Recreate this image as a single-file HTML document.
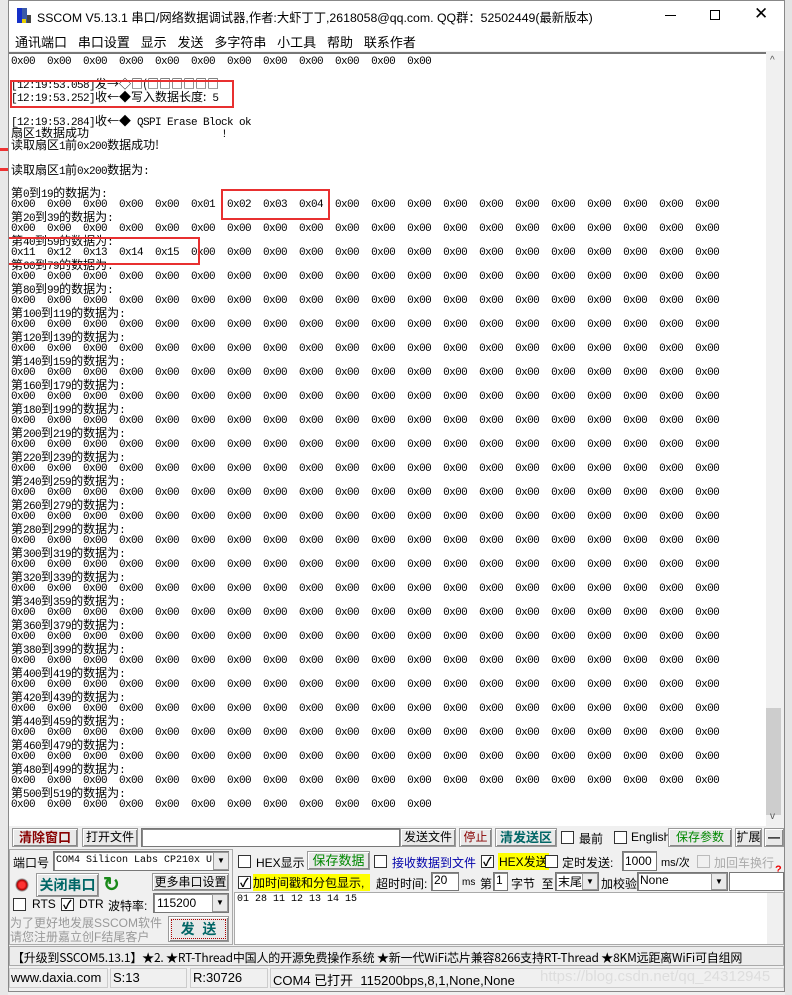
<!DOCTYPE html>
<html><head><meta charset="utf-8">
<style>
*{margin:0;padding:0;box-sizing:border-box}
body{width:792px;height:995px;overflow:hidden;background:#f0f0f0;font-family:"Liberation Sans","Noto Sans CJK SC",sans-serif;font-size:12px;color:#000;position:relative}
.a{position:absolute}
#win{left:8px;top:0;width:777px;height:992px;background:#f0f0f0;border:1px solid #888}
#title{left:9px;top:1px;width:775px;height:29px;background:#fff}
#menu{left:9px;top:30px;width:775px;height:21px;background:#fff}
#txt{left:9px;top:52px;width:757px;height:774px;background:#fff;border-top:2px solid #777;overflow:hidden}
.l{position:absolute;left:2px;white-space:pre;line-height:12px;font-family:"Liberation Mono",monospace;font-size:11px;letter-spacing:-0.6px}
#data{position:absolute;left:2px;top:133px;line-height:12px;font-family:"Liberation Mono",monospace;font-size:11px;letter-spacing:-0.6px}
#data div{height:12px;white-space:pre}
.z{font-family:"Noto Sans CJK SC",sans-serif;font-size:12px;line-height:12px;letter-spacing:0}
.red{position:absolute;border:2px solid #e83030}
.btn{position:absolute;background:#e9e9e9;border:1px solid #999;box-shadow:inset 1px 1px #fff,inset -1px -1px #888;text-align:center;font-size:12px;line-height:17px;white-space:nowrap;overflow:hidden}
.cb{position:absolute;width:13px;height:13px;background:#fff;border:1px solid #333}
.cb.k::after{content:"✓";position:absolute;left:1px;top:-3px;font-size:12px;font-weight:bold}
.inp{position:absolute;background:#fff;border:1px solid #777;box-shadow:inset 1px 1px #888;white-space:nowrap;overflow:hidden}
.t{position:absolute;white-space:nowrap;font-size:12px}
.dd{position:absolute;width:16px;background:#e9e9e9;border:1px solid #999;font-size:8px;text-align:center}
</style></head><body>
<div class="a" style="left:0;top:0;width:8px;height:995px;background:#e8e8e8"></div>
<div class="a" style="left:0;top:148px;width:8px;height:3px;background:#e33"></div>
<div class="a" style="left:0;top:168px;width:8px;height:3px;background:#e33"></div>
<div class="a" style="left:785px;top:0;width:7px;height:995px;background:#e4e4e4"></div>
<div id="win" class="a"></div>
<div id="title" class="a">
 <div class="a" style="left:8px;top:7px;width:5px;height:15px;background:#1530c8"></div>
 <div class="a" style="left:13px;top:7px;width:5px;height:15px;background:#3a5aa8"></div>
 <div class="a" style="left:18px;top:14px;width:4px;height:8px;background:#444"></div>
 <div class="a" style="left:13px;top:18px;width:4px;height:4px;background:#e8d000"></div>
 <div class="t" style="left:28px;top:7px;font-size:12.3px">SSCOM V5.13.1 串口/网络数据调试器,作者:大虾丁丁,2618058@qq.com. QQ群：52502449(最新版本)</div>
 <div class="a" style="left:656px;top:14px;width:11px;height:1px;background:#000"></div>
 <div class="a" style="left:701px;top:9px;width:10px;height:10px;border:1px solid #000"></div>
 <div class="t" style="left:745px;top:3px;font-size:17px">✕</div>
</div>
<div id="menu" class="a"><div class="t" style="left:6px;top:2px;font-size:13px">通讯端口&nbsp;&nbsp; 串口设置&nbsp;&nbsp; 显示&nbsp;&nbsp; 发送&nbsp;&nbsp; 多字符串&nbsp;&nbsp; 小工具&nbsp;&nbsp; 帮助&nbsp;&nbsp; 联系作者</div></div>
<div id="txt" class="a">
<div class="l" style="top:2px">0x00  0x00  0x00  0x00  0x00  0x00  0x00  0x00  0x00  0x00  0x00  0x00</div>
<div class="l" style="top:24px">[12:19:53.058]<span class="z">发→◇□(□□□□□□</span></div>
<div class="l" style="top:37px">[12:19:53.252]<span class="z">收←◆写入数据长度:</span> 5</div>
<div class="l" style="top:61px">[12:19:53.284]<span class="z">收←◆</span> QSPI Erase Block ok</div>
<div class="l" style="top:73px"><span class="z">扇区</span>1<span class="z">数据成功</span>                      !</div>
<div class="l" style="top:85px"><span class="z">读取扇区</span>1<span class="z">前</span>0x200<span class="z">数据成功!</span></div>
<div class="l" style="top:110px"><span class="z">读取扇区</span>1<span class="z">前</span>0x200<span class="z">数据为</span>:</div>
<div id="data">
<div><span class="z">第</span>0<span class="z">到</span>19<span class="z">的数据为</span>:</div><div>0x00  0x00  0x00  0x00  0x00  0x01  0x02  0x03  0x04  0x00  0x00  0x00  0x00  0x00  0x00  0x00  0x00  0x00  0x00  0x00</div>
<div><span class="z">第</span>20<span class="z">到</span>39<span class="z">的数据为</span>:</div><div>0x00  0x00  0x00  0x00  0x00  0x00  0x00  0x00  0x00  0x00  0x00  0x00  0x00  0x00  0x00  0x00  0x00  0x00  0x00  0x00</div>
<div><span class="z">第</span>40<span class="z">到</span>59<span class="z">的数据为</span>:</div><div>0x11  0x12  0x13  0x14  0x15  0x00  0x00  0x00  0x00  0x00  0x00  0x00  0x00  0x00  0x00  0x00  0x00  0x00  0x00  0x00</div>
<div><span class="z">第</span>60<span class="z">到</span>79<span class="z">的数据为</span>:</div><div>0x00  0x00  0x00  0x00  0x00  0x00  0x00  0x00  0x00  0x00  0x00  0x00  0x00  0x00  0x00  0x00  0x00  0x00  0x00  0x00</div>
<div><span class="z">第</span>80<span class="z">到</span>99<span class="z">的数据为</span>:</div><div>0x00  0x00  0x00  0x00  0x00  0x00  0x00  0x00  0x00  0x00  0x00  0x00  0x00  0x00  0x00  0x00  0x00  0x00  0x00  0x00</div>
<div><span class="z">第</span>100<span class="z">到</span>119<span class="z">的数据为</span>:</div><div>0x00  0x00  0x00  0x00  0x00  0x00  0x00  0x00  0x00  0x00  0x00  0x00  0x00  0x00  0x00  0x00  0x00  0x00  0x00  0x00</div>
<div><span class="z">第</span>120<span class="z">到</span>139<span class="z">的数据为</span>:</div><div>0x00  0x00  0x00  0x00  0x00  0x00  0x00  0x00  0x00  0x00  0x00  0x00  0x00  0x00  0x00  0x00  0x00  0x00  0x00  0x00</div>
<div><span class="z">第</span>140<span class="z">到</span>159<span class="z">的数据为</span>:</div><div>0x00  0x00  0x00  0x00  0x00  0x00  0x00  0x00  0x00  0x00  0x00  0x00  0x00  0x00  0x00  0x00  0x00  0x00  0x00  0x00</div>
<div><span class="z">第</span>160<span class="z">到</span>179<span class="z">的数据为</span>:</div><div>0x00  0x00  0x00  0x00  0x00  0x00  0x00  0x00  0x00  0x00  0x00  0x00  0x00  0x00  0x00  0x00  0x00  0x00  0x00  0x00</div>
<div><span class="z">第</span>180<span class="z">到</span>199<span class="z">的数据为</span>:</div><div>0x00  0x00  0x00  0x00  0x00  0x00  0x00  0x00  0x00  0x00  0x00  0x00  0x00  0x00  0x00  0x00  0x00  0x00  0x00  0x00</div>
<div><span class="z">第</span>200<span class="z">到</span>219<span class="z">的数据为</span>:</div><div>0x00  0x00  0x00  0x00  0x00  0x00  0x00  0x00  0x00  0x00  0x00  0x00  0x00  0x00  0x00  0x00  0x00  0x00  0x00  0x00</div>
<div><span class="z">第</span>220<span class="z">到</span>239<span class="z">的数据为</span>:</div><div>0x00  0x00  0x00  0x00  0x00  0x00  0x00  0x00  0x00  0x00  0x00  0x00  0x00  0x00  0x00  0x00  0x00  0x00  0x00  0x00</div>
<div><span class="z">第</span>240<span class="z">到</span>259<span class="z">的数据为</span>:</div><div>0x00  0x00  0x00  0x00  0x00  0x00  0x00  0x00  0x00  0x00  0x00  0x00  0x00  0x00  0x00  0x00  0x00  0x00  0x00  0x00</div>
<div><span class="z">第</span>260<span class="z">到</span>279<span class="z">的数据为</span>:</div><div>0x00  0x00  0x00  0x00  0x00  0x00  0x00  0x00  0x00  0x00  0x00  0x00  0x00  0x00  0x00  0x00  0x00  0x00  0x00  0x00</div>
<div><span class="z">第</span>280<span class="z">到</span>299<span class="z">的数据为</span>:</div><div>0x00  0x00  0x00  0x00  0x00  0x00  0x00  0x00  0x00  0x00  0x00  0x00  0x00  0x00  0x00  0x00  0x00  0x00  0x00  0x00</div>
<div><span class="z">第</span>300<span class="z">到</span>319<span class="z">的数据为</span>:</div><div>0x00  0x00  0x00  0x00  0x00  0x00  0x00  0x00  0x00  0x00  0x00  0x00  0x00  0x00  0x00  0x00  0x00  0x00  0x00  0x00</div>
<div><span class="z">第</span>320<span class="z">到</span>339<span class="z">的数据为</span>:</div><div>0x00  0x00  0x00  0x00  0x00  0x00  0x00  0x00  0x00  0x00  0x00  0x00  0x00  0x00  0x00  0x00  0x00  0x00  0x00  0x00</div>
<div><span class="z">第</span>340<span class="z">到</span>359<span class="z">的数据为</span>:</div><div>0x00  0x00  0x00  0x00  0x00  0x00  0x00  0x00  0x00  0x00  0x00  0x00  0x00  0x00  0x00  0x00  0x00  0x00  0x00  0x00</div>
<div><span class="z">第</span>360<span class="z">到</span>379<span class="z">的数据为</span>:</div><div>0x00  0x00  0x00  0x00  0x00  0x00  0x00  0x00  0x00  0x00  0x00  0x00  0x00  0x00  0x00  0x00  0x00  0x00  0x00  0x00</div>
<div><span class="z">第</span>380<span class="z">到</span>399<span class="z">的数据为</span>:</div><div>0x00  0x00  0x00  0x00  0x00  0x00  0x00  0x00  0x00  0x00  0x00  0x00  0x00  0x00  0x00  0x00  0x00  0x00  0x00  0x00</div>
<div><span class="z">第</span>400<span class="z">到</span>419<span class="z">的数据为</span>:</div><div>0x00  0x00  0x00  0x00  0x00  0x00  0x00  0x00  0x00  0x00  0x00  0x00  0x00  0x00  0x00  0x00  0x00  0x00  0x00  0x00</div>
<div><span class="z">第</span>420<span class="z">到</span>439<span class="z">的数据为</span>:</div><div>0x00  0x00  0x00  0x00  0x00  0x00  0x00  0x00  0x00  0x00  0x00  0x00  0x00  0x00  0x00  0x00  0x00  0x00  0x00  0x00</div>
<div><span class="z">第</span>440<span class="z">到</span>459<span class="z">的数据为</span>:</div><div>0x00  0x00  0x00  0x00  0x00  0x00  0x00  0x00  0x00  0x00  0x00  0x00  0x00  0x00  0x00  0x00  0x00  0x00  0x00  0x00</div>
<div><span class="z">第</span>460<span class="z">到</span>479<span class="z">的数据为</span>:</div><div>0x00  0x00  0x00  0x00  0x00  0x00  0x00  0x00  0x00  0x00  0x00  0x00  0x00  0x00  0x00  0x00  0x00  0x00  0x00  0x00</div>
<div><span class="z">第</span>480<span class="z">到</span>499<span class="z">的数据为</span>:</div><div>0x00  0x00  0x00  0x00  0x00  0x00  0x00  0x00  0x00  0x00  0x00  0x00  0x00  0x00  0x00  0x00  0x00  0x00  0x00  0x00</div>
<div><span class="z">第</span>500<span class="z">到</span>519<span class="z">的数据为</span>:</div><div>0x00  0x00  0x00  0x00  0x00  0x00  0x00  0x00  0x00  0x00  0x00  0x00</div>
</div>
<div class="red" style="left:1px;top:26px;width:224px;height:28px"></div>
<div class="red" style="left:212px;top:135px;width:109px;height:31px"></div>
<div class="red" style="left:-2px;top:183px;width:193px;height:28px"></div>
</div>
<div class="a" style="left:766px;top:52px;width:18px;height:774px;background:#f0f0f0"></div>
<div class="t" style="left:770px;top:55px;font-size:10px;color:#555">^</div>
<div class="a" style="left:766px;top:708px;width:15px;height:107px;background:#cdcdcd"></div>
<div class="t" style="left:770px;top:811px;font-size:10px;color:#555">v</div>

<!-- row1 -->
<div class="btn" style="left:12px;top:828px;width:66px;height:19px;color:#800;font-weight:bold;font-size:13px">清除窗口</div>
<div class="btn" style="left:82px;top:828px;width:56px;height:19px">打开文件</div>
<div class="inp" style="left:141px;top:828px;width:259px;height:19px"></div>
<div class="btn" style="left:400px;top:828px;width:56px;height:19px">发送文件</div>
<div class="btn" style="left:459px;top:828px;width:33px;height:19px;color:#800">停止</div>
<div class="btn" style="left:495px;top:828px;width:62px;height:19px;color:#066;font-weight:bold;font-size:13px">清发送区</div>
<div class="cb" style="left:561px;top:831px"></div><div class="t" style="left:579px;top:830px">最前</div>
<div class="cb" style="left:614px;top:831px"></div><div class="t" style="left:631px;top:830px">English</div>
<div class="btn" style="left:668px;top:828px;width:64px;height:19px;color:#080">保存参数</div>
<div class="btn" style="left:735px;top:828px;width:27px;height:19px">扩展</div>
<div class="btn" style="left:764px;top:828px;width:20px;height:19px;font-weight:bold">—</div>

<!-- left panel -->
<div class="a" style="left:9px;top:849px;width:224px;height:96px;border:1px solid #aaa"></div>
<div class="t" style="left:13px;top:854px">端口号</div>
<div class="inp" style="left:53px;top:851px;width:176px;height:20px;font-family:'Liberation Mono',monospace;font-size:10px;line-height:18px;padding-left:2px">COM4 Silicon Labs CP210x U:</div>
<div class="dd" style="left:213px;top:852px;height:18px;line-height:16px">▼</div>
<div class="a" style="left:15px;top:878px;width:14px;height:14px;border-radius:50%;background:radial-gradient(#f33 30%,#a00 50%,#888 60%,#eee 70%)"></div>
<div class="btn" style="left:36px;top:873px;width:63px;height:24px;color:#066;font-weight:bold;line-height:22px;font-size:14px">关闭串口</div>
<div class="t" style="left:103px;top:872px;color:#1a8a1a;font-size:20px;font-weight:bold">↻</div>
<div class="btn" style="left:152px;top:873px;width:77px;height:18px">更多串口设置</div>
<div class="cb" style="left:13px;top:898px"></div><div class="t" style="left:32px;top:897px">RTS</div>
<div class="cb k" style="left:61px;top:898px"></div><div class="t" style="left:79px;top:897px">DTR</div>
<div class="t" style="left:108px;top:897px">波特率:</div>
<div class="inp" style="left:153px;top:893px;width:76px;height:20px;font-size:12px;line-height:18px;padding-left:3px">115200</div>
<div class="dd" style="left:212px;top:894px;height:18px;line-height:16px">▼</div>
<div class="t" style="left:10px;top:916px;color:#999;font-size:12px;line-height:14px">为了更好地发展SSCOM软件<br>请您注册嘉立创F结尾客户</div>
<div class="btn" style="left:168px;top:916px;width:61px;height:26px;line-height:24px;color:#066;font-weight:bold;font-size:14px;outline:1px dotted #a00;outline-offset:-4px">发&nbsp;&nbsp;送</div>

<!-- right panel -->
<div class="cb" style="left:238px;top:855px"></div><div class="t" style="left:256px;top:854px">HEX显示</div>
<div class="btn" style="left:307px;top:851px;width:63px;height:19px;color:#080;font-size:13px">保存数据</div>
<div class="cb" style="left:374px;top:855px"></div><div class="t" style="left:392px;top:854px;color:#00a">接收数据到文件</div>
<div class="cb k" style="left:481px;top:855px"></div><div class="t" style="left:498px;top:853px;background:#ff0;padding:0 1px">HEX发送</div>
<div class="cb" style="left:545px;top:855px"></div><div class="t" style="left:562px;top:854px">定时发送:</div>
<div class="inp" style="left:622px;top:851px;width:35px;height:20px;font-size:12px;padding-left:2px;line-height:18px">1000</div>
<div class="t" style="left:661px;top:854px;font-size:11px">ms/次</div>
<div class="cb" style="left:697px;top:855px;border-color:#bbb;background:#f0f0f0"></div><div class="t" style="left:714px;top:854px;color:#aaa">加回车换行</div>
<div class="t" style="left:775px;top:864px;color:#e00;font-weight:bold;font-size:11px">?</div>
<div class="cb k" style="left:238px;top:876px"></div><div class="t" style="left:253px;top:874px;background:#ff0;width:117px">加时间戳和分包显示,</div>
<div class="t" style="left:376px;top:875px">超时时间:</div>
<div class="inp" style="left:431px;top:872px;width:28px;height:19px;font-size:12px;padding-left:2px">20</div>
<div class="t" style="left:462px;top:877px;font-size:10px">ms</div>
<div class="t" style="left:480px;top:875px">第</div>
<div class="inp" style="left:493px;top:872px;width:15px;height:19px;font-size:12px;padding-left:2px">1</div>
<div class="t" style="left:511px;top:875px">字节&nbsp; 至</div>
<div class="inp" style="left:555px;top:872px;width:44px;height:19px;font-size:12px;padding-left:2px">末尾</div>
<div class="dd" style="left:582px;top:873px;height:17px;line-height:15px">▼</div>
<div class="t" style="left:601px;top:875px">加校验</div>
<div class="inp" style="left:637px;top:872px;width:91px;height:19px;font-size:12px;padding-left:2px">None</div>
<div class="dd" style="left:711px;top:873px;height:17px;line-height:15px">▼</div>
<div class="inp" style="left:729px;top:872px;width:55px;height:19px;box-shadow:none"></div>
<div class="a" style="left:234px;top:892px;width:550px;height:53px;background:#fff;border:1px solid #aaa"></div>
<div class="t" style="left:237px;top:894px;font-family:'Liberation Mono',monospace;font-size:10px">01 28 11 12 13 14 15</div>
<div class="a" style="left:767px;top:893px;width:16px;height:51px;background:#f0f0f0"></div>

<!-- marquee -->
<div class="a" style="left:9px;top:946px;width:775px;height:20px;background:#ececec;border:1px solid #aaa"></div>
<div class="t" style="left:12px;top:949px;font-size:12px;font-family:'Noto Sans CJK SC',sans-serif;letter-spacing:-0.2px">【升级到SSCOM5.13.1】★2. ★RT-Thread中国人的开源免费操作系统 ★新一代WiFi芯片兼容8266支持RT-Thread ★8KM远距离WiFi可自组网</div>

<!-- status -->
<div class="a" style="left:9px;top:967px;width:775px;height:22px;background:#f0f0f0"></div>
<div class="a" style="left:9px;top:968px;width:99px;height:20px;border:1px solid #ccc"></div>
<div class="a" style="left:110px;top:968px;width:77px;height:20px;border:1px solid #ccc"></div>
<div class="a" style="left:190px;top:968px;width:78px;height:20px;border:1px solid #ccc"></div>
<div class="a" style="left:270px;top:968px;width:514px;height:20px;border:1px solid #ccc"></div>
<div class="t" style="left:11px;top:970px;font-size:13px">www.daxia.com</div>
<div class="t" style="left:113px;top:970px;font-size:13px">S:13</div>
<div class="t" style="left:193px;top:970px;font-size:13px">R:30726</div>
<div class="t" style="left:273px;top:970px;font-size:13px">COM4 已打开&nbsp; 115200bps,8,1,None,None</div>
<div class="t" style="left:540px;top:968px;color:#ddd;font-size:15px">https://blog.csdn.net/qq_24312945</div>
</body></html>
